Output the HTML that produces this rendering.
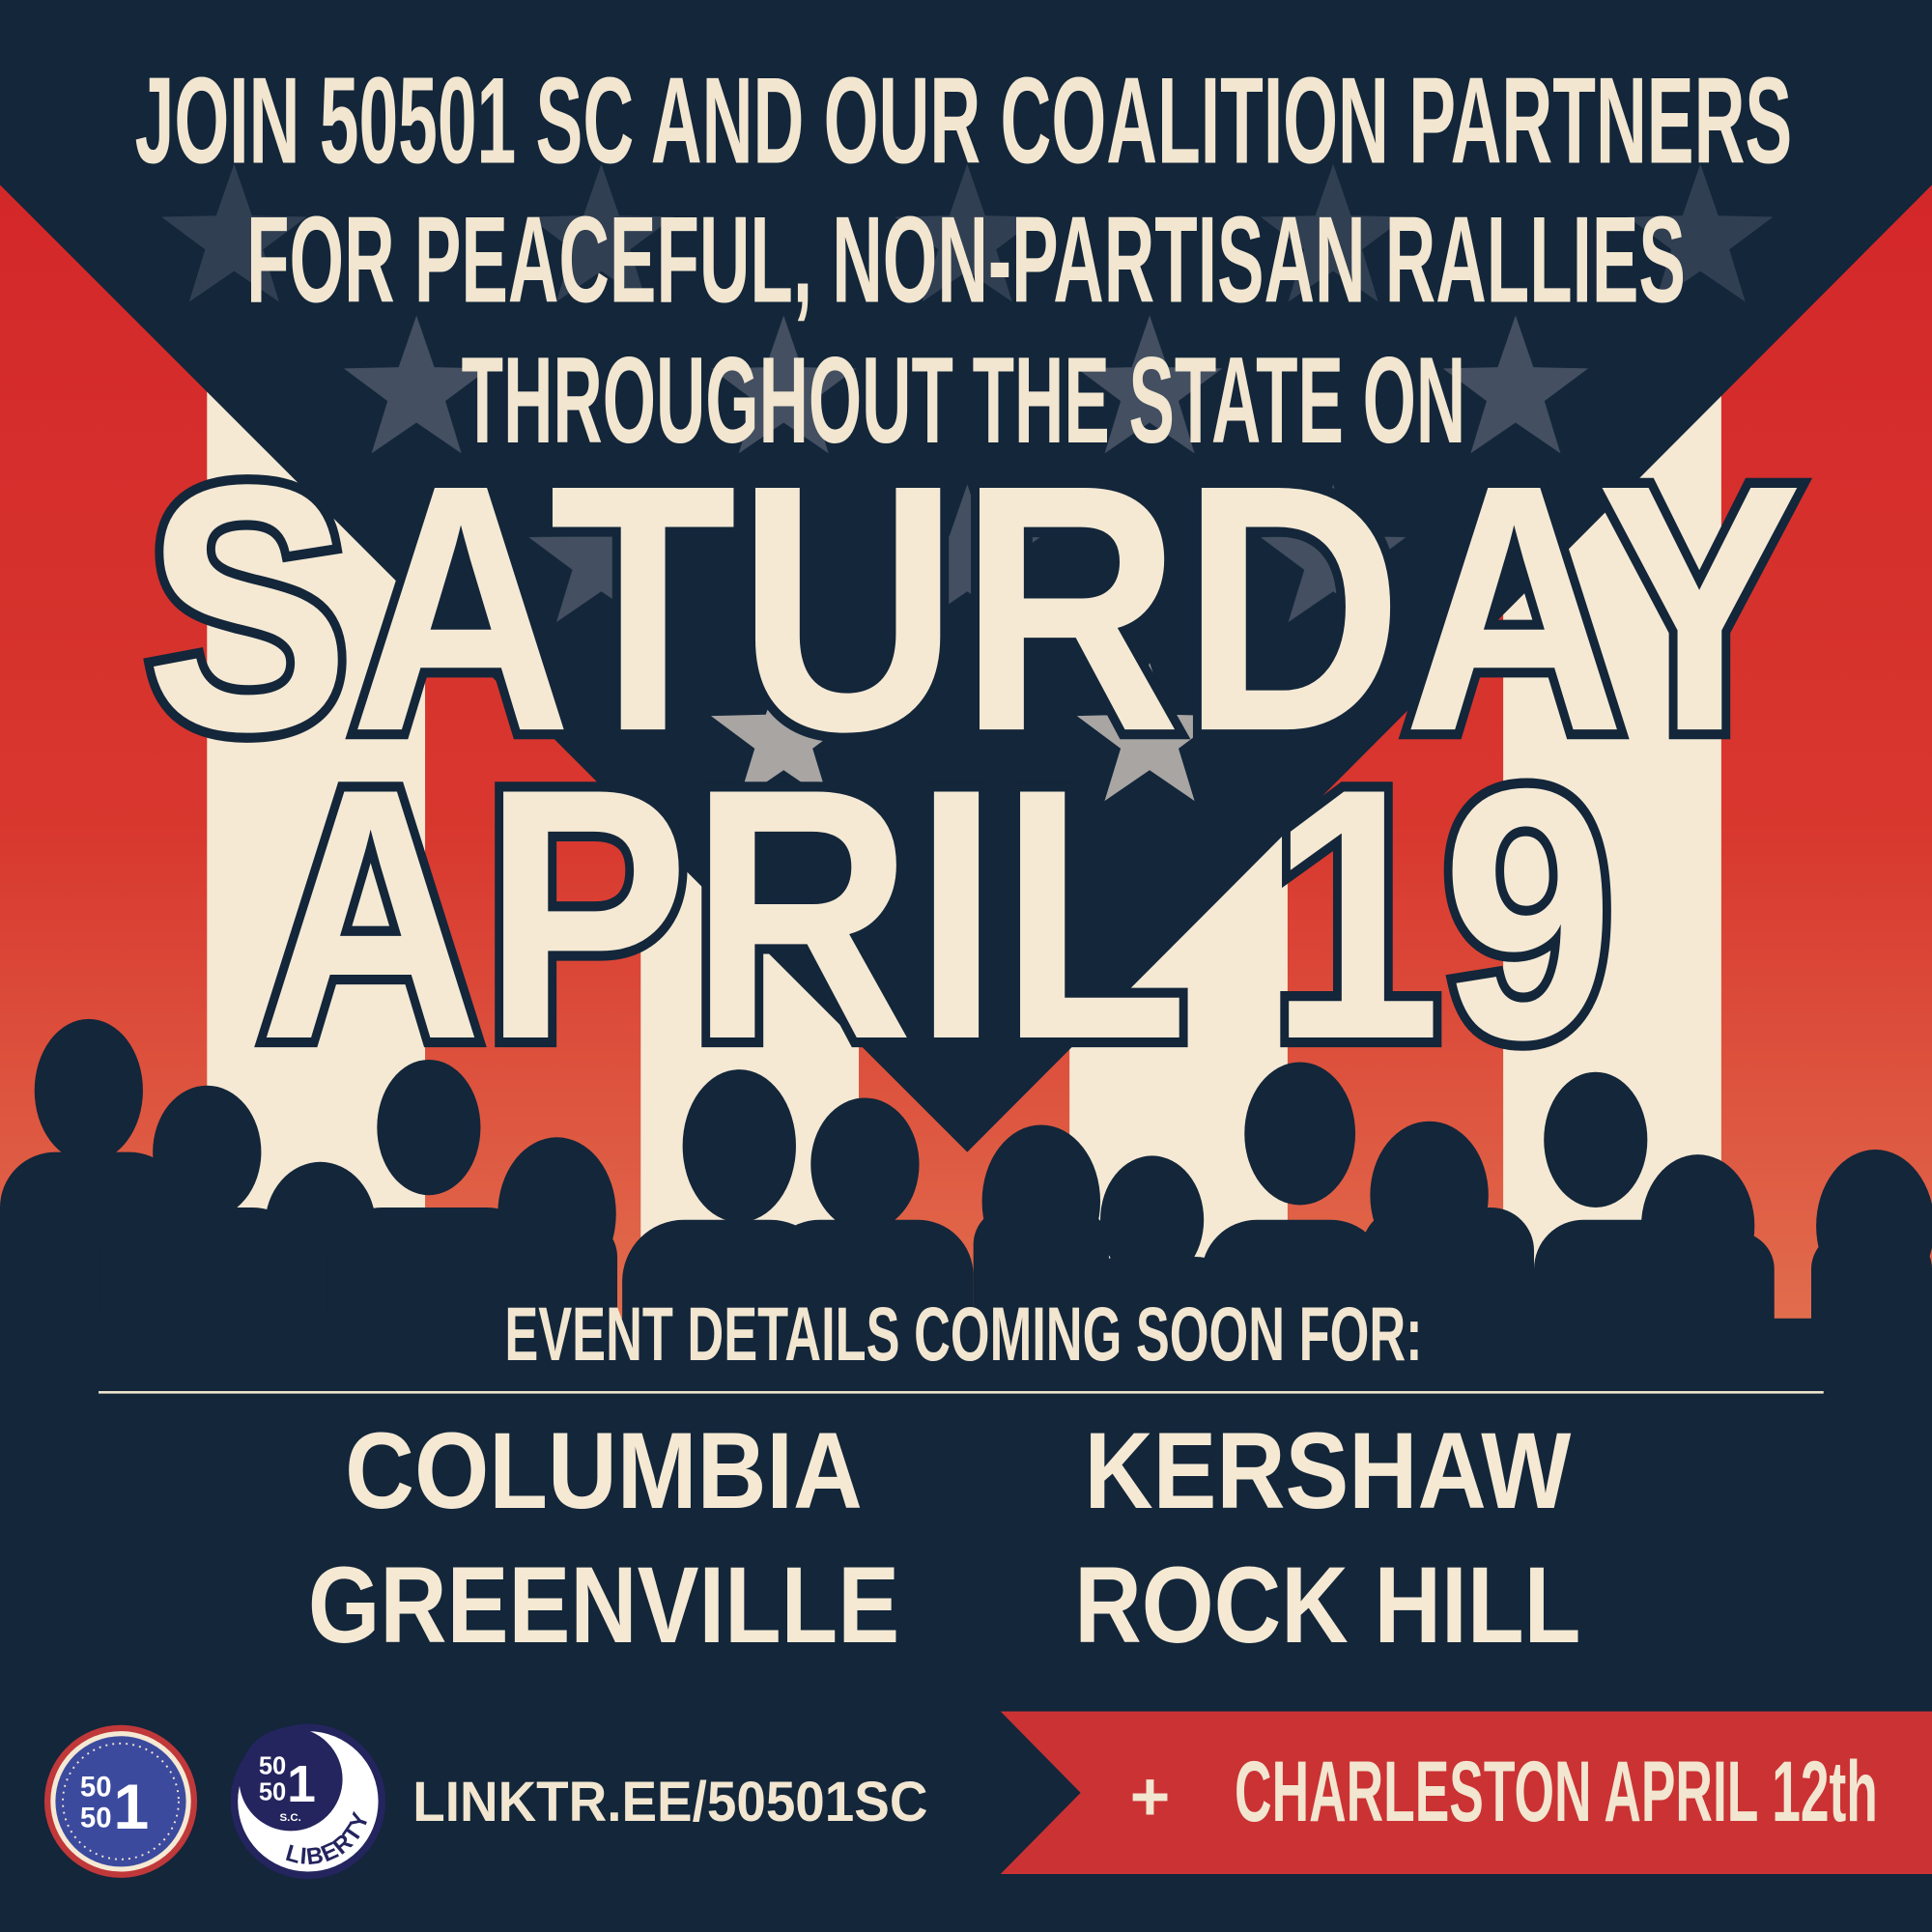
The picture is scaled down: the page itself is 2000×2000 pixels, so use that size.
<!DOCTYPE html>
<html><head><meta charset="utf-8"><style>
html,body{margin:0;padding:0;background:#13263a;}
svg{display:block}
text{font-family:"Liberation Sans",sans-serif;font-weight:bold}
</style></head><body>
<svg width="2000" height="2000" viewBox="0 0 1568 1568" xmlns="http://www.w3.org/2000/svg">
<defs>
<linearGradient id="rg" x1="0" y1="0" x2="0" y2="1">
<stop offset="0" stop-color="#d3272a"/><stop offset="0.55" stop-color="#d8372e"/><stop offset="1" stop-color="#e2704f"/>
</linearGradient>
<polygon id="st" points="0,-62 14.5,-20 59,-19 23.5,7.5 36.5,50 0,25 -36.5,50 -23.5,7.5 -59,-19 -14.5,-20"/>
<path id="arc" d="M 231 1509 A 50 50 0 0 0 297 1445"/>
</defs>
<rect width="1568" height="1568" fill="#13263a"/>
<rect x="0" y="140" width="1568" height="960" fill="url(#rg)"/>
<g fill="#f5e9d4">
<rect x="168" y="140" width="177" height="960"/>
<rect x="520" y="140" width="177" height="960"/>
<rect x="868" y="140" width="177" height="960"/>
<rect x="1220" y="140" width="177" height="960"/>
</g>
<polygon points="0,0 1568,0 1568,150 785,935 0,150" fill="#13263a"/>
<g fill="#4a5566" opacity="0.55">
<use href="#st" x="190" y="195"/><use href="#st" x="488" y="195"/><use href="#st" x="785" y="195"/><use href="#st" x="1082" y="195"/><use href="#st" x="1380" y="195"/>
</g>
<g fill="#4a5566" opacity="0.9">
<use href="#st" x="338" y="318"/><use href="#st" x="636" y="318"/><use href="#st" x="933" y="318"/><use href="#st" x="1230" y="318"/>
<use href="#st" x="488" y="455"/><use href="#st" x="785" y="455"/><use href="#st" x="1082" y="455"/>
</g>
<g fill="#a8a5a3">
<use href="#st" x="636" y="600"/><use href="#st" x="933" y="600"/>
</g>
<g fill="#f2e6d0">
<text x="782" y="132" font-size="100" text-anchor="middle" textLength="1345" lengthAdjust="spacingAndGlyphs">JOIN 50501 SC AND OUR COALITION PARTNERS</text>
<text x="784" y="245" font-size="100" text-anchor="middle" textLength="1168" lengthAdjust="spacingAndGlyphs">FOR PEACEFUL, NON-PARTISAN RALLIES</text>
<text x="782" y="359" font-size="100" text-anchor="middle" textLength="815" lengthAdjust="spacingAndGlyphs">THROUGHOUT THE STATE ON</text>
</g>
<g fill="#f5e9d4" stroke="#13263a" stroke-width="16" stroke-linejoin="miter" paint-order="stroke" font-family="Liberation Sans" font-weight="900">
<text x="790" y="592" font-size="285" text-anchor="middle" textLength="1345" lengthAdjust="spacingAndGlyphs">SATURDAY</text>
<text x="760" y="842" font-size="290" text-anchor="middle" textLength="1100" lengthAdjust="spacingAndGlyphs">APRIL 19</text>
</g>
<g fill="#13263a">
<ellipse cx="72" cy="885" rx="44" ry="58"/><rect x="0" y="935" width="150" height="200" rx="45"/>
<ellipse cx="168" cy="935" rx="44" ry="54"/><rect x="80" y="980" width="170" height="200" rx="45"/>
<ellipse cx="260" cy="995" rx="45" ry="52"/><rect x="215" y="1000" width="100" height="200" rx="30"/>
<ellipse cx="348" cy="915" rx="42" ry="55"/><rect x="265" y="980" width="175" height="200" rx="45"/>
<ellipse cx="452" cy="985" rx="48" ry="62"/><rect x="405" y="990" width="96" height="200" rx="30"/>
<ellipse cx="600" cy="930" rx="46" ry="62"/><rect x="505" y="990" width="170" height="200" rx="50"/>
<ellipse cx="702" cy="945" rx="44" ry="54"/><rect x="620" y="990" width="170" height="200" rx="45"/>
<ellipse cx="845" cy="975" rx="48" ry="62"/><rect x="790" y="980" width="110" height="200" rx="30"/>
<ellipse cx="935" cy="990" rx="42" ry="52"/><rect x="870" y="1020" width="140" height="200" rx="40"/>
<ellipse cx="1055" cy="920" rx="45" ry="58"/><rect x="975" y="990" width="150" height="200" rx="45"/>
<ellipse cx="1160" cy="970" rx="48" ry="60"/><rect x="1105" y="980" width="140" height="200" rx="35"/>
<ellipse cx="1295" cy="925" rx="42" ry="55"/><rect x="1245" y="990" width="130" height="200" rx="40"/>
<ellipse cx="1378" cy="995" rx="46" ry="58"/><rect x="1330" y="1000" width="110" height="200" rx="30"/>
<ellipse cx="1522" cy="995" rx="48" ry="62"/><rect x="1470" y="1000" width="98" height="200" rx="30"/>
<rect x="0" y="1070" width="1568" height="498"/>
</g>
<text x="782" y="1104" font-size="62" fill="#f2e6d0" text-anchor="middle" textLength="745" lengthAdjust="spacingAndGlyphs">EVENT DETAILS COMING SOON FOR:</text>
<rect x="80" y="1129" width="1400" height="2" fill="#f2e6d0"/>
<g fill="#f5e9d4" font-size="88">
<text x="280" y="1224" textLength="420" lengthAdjust="spacingAndGlyphs">COLUMBIA</text>
<text x="880" y="1224" textLength="395" lengthAdjust="spacingAndGlyphs">KERSHAW</text>
<text x="250" y="1333" textLength="480" lengthAdjust="spacingAndGlyphs">GREENVILLE</text>
<text x="872" y="1333" textLength="411" lengthAdjust="spacingAndGlyphs">ROCK HILL</text>
</g>
<polygon points="812,1389 1568,1389 1568,1521 812,1521 877,1455" fill="#cb3234"/>
<text x="917" y="1477" font-size="56" fill="#f2e6d0">+</text>
<text x="1002" y="1478" font-size="70" fill="#f2e6d0" textLength="522" lengthAdjust="spacingAndGlyphs">CHARLESTON APRIL 12th</text>
<circle cx="98" cy="1462" r="62" fill="#c0383a"/>
<circle cx="98" cy="1462" r="57" fill="#f5e9d4"/>
<circle cx="98" cy="1462" r="53" fill="#3c4a9e"/>
<circle cx="98" cy="1462" r="47" fill="none" stroke="#f5e9d4" stroke-width="1.5" stroke-dasharray="1.5 4"/>
<text x="65" y="1458" font-size="23" fill="#fff">50</text>
<text x="65" y="1483" font-size="23" fill="#fff">50</text>
<text x="92" y="1484" font-size="52" fill="#fff">1</text>
<circle cx="250" cy="1462" r="63" fill="#24245e"/>
<circle cx="250" cy="1462" r="57" fill="#fff"/>
<circle cx="236" cy="1444" r="42" fill="#24245e"/>
<text x="210" y="1440" font-size="20" fill="#fff">50</text>
<text x="210" y="1461" font-size="20" fill="#fff">50</text>
<text x="233" y="1462" font-size="42" fill="#fff">1</text>
<text x="227" y="1478" font-size="9" fill="#fff" font-weight="normal">S.C.</text>
<text font-size="19" fill="#24245e" letter-spacing="1"><textPath href="#arc">LIBERTY</textPath></text>
<text x="335" y="1478" font-size="46" fill="#f2e6d0" font-weight="normal" textLength="418" lengthAdjust="spacingAndGlyphs">LINKTR.EE/50501SC</text>
</svg>
</body></html>
